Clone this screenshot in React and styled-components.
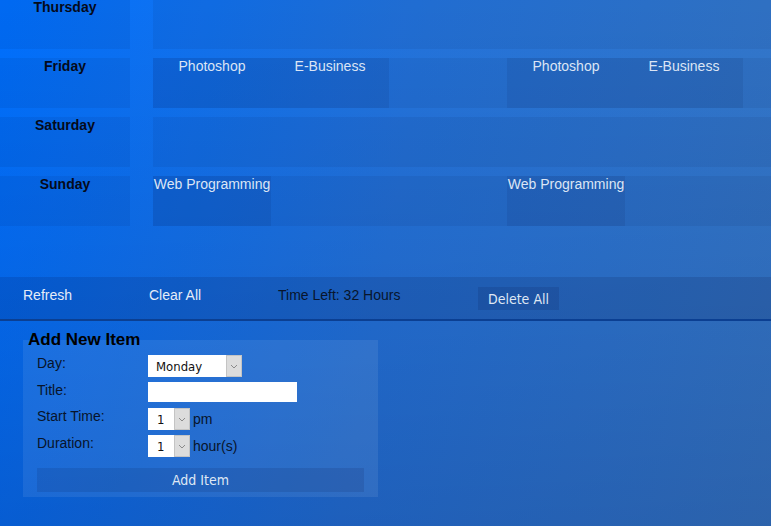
import React from 'react';
import styled, { createGlobalStyle } from 'styled-components';

// Page setup
const GlobalStyle = createGlobalStyle`
    html, body {
        margin: 0;
        padding: 0;
    }
    body {
        min-height: 100vh;
        font-family: "Liberation Sans", Arial, sans-serif;
        font-size: 14px;
        background:
            linear-gradient(to bottom, rgba(0, 0, 40, 0) 0%, rgba(0, 0, 40, 0.18) 100%),
            linear-gradient(100deg, #0070ff 0%, #2474dc 50%, #3678c8 100%);
        background-attachment: fixed;
    }
`;

const Page = styled.div`
    width: 100%;
    min-height: 100vh;
    overflow: hidden;
`;

// Schedule grid
const Schedule = styled.div`
    display: flex;
    flex-direction: column;
    gap: 9px;
    margin-top: -1px;
    padding-bottom: 51px;
`;

const Row = styled.div`
    display: flex;
    height: 50px;
`;

const DayCell = styled.div`
    width: 130px;
    flex-shrink: 0;
    text-align: center;
    font-weight: bold;
    color: #050a1a;
    background: rgba(0, 0, 40, 0.06);
`;

const Divider = styled.div`
    width: 23px;
    flex-shrink: 0;
`;

const Slots = styled.div`
    flex: 1;
    display: grid;
    grid-template-columns: repeat(5, 118px);
    background: rgba(0, 0, 40, 0.06);
`;

const Slot = styled.div`
    grid-column: ${p => p.col};
    text-align: center;
    white-space: nowrap;
    color: #dbe5f5;
    background: rgba(0, 0, 40, 0.07);
`;

// Toolbar
const Toolbar = styled.div`
    display: grid;
    grid-template-columns: 126px 129px 200px auto;
    align-items: start;
    height: 44px;
    box-sizing: border-box;
    padding: 10px 0 0 23px;
    background: rgba(0, 0, 40, 0.12);
    border-bottom: 2px solid #0b3f92;
`;

const ToolLink = styled.a`
    color: ${p => (p.dark ? '#08152c' : '#e4ecf8')};
    text-decoration: none;
    line-height: 16px;
    cursor: pointer;
`;

const DeleteButton = styled.button`
    justify-self: start;
    height: 23px;
    width: 81px;
    padding: 0;
    border: none;
    background: rgba(0, 0, 40, 0.1);
    color: #dfe7f4;
    font-family: "DejaVu Sans Condensed", "DejaVu Sans", sans-serif;
    font-size: 14px;
    cursor: pointer;
`;

// Add item form
const FormArea = styled.div`
    padding: 19px 0 0 23px;
`;

const Panel = styled.div`
    display: flow-root;
    width: 355px;
    box-sizing: border-box;
    padding: 0 14px 5px;
    background: rgba(255, 255, 255, 0.08);
`;

const Heading = styled.div`
    margin: -10px 0 6px -9px;
    font-size: 17px;
    line-height: 19px;
    font-weight: bold;
    color: #000;
`;

const FormRow = styled.div`
    display: flex;
    align-items: flex-start;
    margin-bottom: ${p => p.gap ?? 5}px;
`;

const Label = styled.div`
    width: 111px;
    flex-shrink: 0;
    line-height: 16px;
    color: #08142a;
`;

const Control = styled.div`
    display: flex;
    align-items: center;
    gap: 3px;
    color: #08142a;
`;

const SelectBox = styled.div`
    display: flex;
    width: ${p => p.width}px;
    height: 22px;
    background: #fff;
    font-family: "DejaVu Sans Condensed", "DejaVu Sans", sans-serif;
    font-size: 13px;
    color: #111;
`;

const SelectValue = styled.div`
    flex: 1;
    display: flex;
    align-items: center;
    padding-left: ${p => p.pad || 8}px;
`;

const Arrow = styled.div`
    width: 16px;
    flex-shrink: 0;
    display: flex;
    align-items: center;
    justify-content: center;
    box-sizing: border-box;
    background: #dcdcdc;
    border: 1px solid #c4c4c4;
`;

const TextInput = styled.input`
    width: 149px;
    height: 20px;
    box-sizing: border-box;
    border: none;
    padding: 0 4px;
    background: #fff;
    outline: none;
`;

const AddButton = styled.button`
    display: block;
    width: 100%;
    height: 24px;
    margin-top: 11px;
    padding: 0;
    border: none;
    background: rgba(0, 0, 40, 0.1);
    color: #dfe7f4;
    font-family: "DejaVu Sans Condensed", "DejaVu Sans", sans-serif;
    font-size: 14px;
    cursor: pointer;
`;

const Chevron = () => (
    <svg width="8" height="5" viewBox="0 0 8 5">
        <path d="M1 1 L4 4 L7 1" fill="none" stroke="#8a8a8a" strokeWidth="1" />
    </svg>
);

const Select = ({ value, width, pad }) => (
    <SelectBox width={width}>
        <SelectValue pad={pad}>{value}</SelectValue>
        <Arrow><Chevron /></Arrow>
    </SelectBox>
);

const days = [
    { name: 'Thursday', items: [] },
    {
        name: 'Friday',
        items: [
            { col: 1, title: 'Photoshop' },
            { col: 2, title: 'E-Business' },
            { col: 4, title: 'Photoshop' },
            { col: 5, title: 'E-Business' },
        ],
    },
    { name: 'Saturday', items: [] },
    {
        name: 'Sunday',
        items: [
            { col: 1, title: 'Web Programming' },
            { col: 4, title: 'Web Programming' },
        ],
    },
];

export default function App() {
    return (
        <Page>
            <GlobalStyle />
            <Schedule>
                {days.map(day => (
                    <Row key={day.name}>
                        <DayCell>{day.name}</DayCell>
                        <Divider />
                        <Slots>
                            {day.items.map(item => (
                                <Slot key={item.col} col={item.col}>{item.title}</Slot>
                            ))}
                        </Slots>
                    </Row>
                ))}
            </Schedule>

            <Toolbar>
                <ToolLink>Refresh</ToolLink>
                <ToolLink>Clear All</ToolLink>
                <ToolLink dark>Time Left: 32 Hours</ToolLink>
                <DeleteButton>Delete All</DeleteButton>
            </Toolbar>

            <FormArea>
                <Panel>
                    <Heading>Add New Item</Heading>
                    <FormRow>
                        <Label>Day:</Label>
                        <Control><Select value="Monday" width={94} /></Control>
                    </FormRow>
                    <FormRow gap={6}>
                        <Label>Title:</Label>
                        <Control><TextInput type="text" /></Control>
                    </FormRow>
                    <FormRow>
                        <Label>Start Time:</Label>
                        <Control><Select value="1" width={42} pad={9} />pm</Control>
                    </FormRow>
                    <FormRow gap={0}>
                        <Label>Duration:</Label>
                        <Control><Select value="1" width={42} pad={9} />hour(s)</Control>
                    </FormRow>
                    <AddButton>Add Item</AddButton>
                </Panel>
            </FormArea>
        </Page>
    );
}
